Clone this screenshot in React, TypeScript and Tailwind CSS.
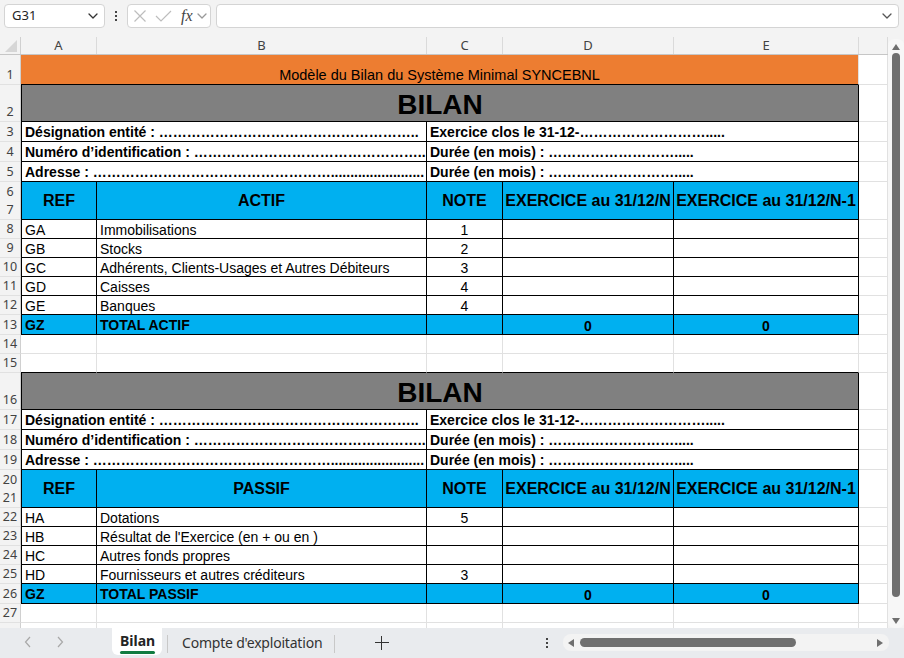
import React from 'react';

type Line = { ref: string; label: string; note?: string };

const actif: Line[] = [
  { ref: 'GA', label: 'Immobilisations', note: '1' },
  { ref: 'GB', label: 'Stocks', note: '2' },
  { ref: 'GC', label: 'Adhérents, Clients-Usages et Autres Débiteurs', note: '3' },
  { ref: 'GD', label: 'Caisses', note: '4' },
  { ref: 'GE', label: 'Banques', note: '4' },
];

const passif: Line[] = [
  { ref: 'HA', label: 'Dotations', note: '5' },
  { ref: 'HB', label: "Résultat de l'Exercice (en + ou en )" },
  { ref: 'HC', label: 'Autres fonds propres' },
  { ref: 'HD', label: 'Fournisseurs et autres créditeurs', note: '3' },
];

const ell = (n: number) => '…'.repeat(n);

// cell border presets
const tb = 'border-r border-b border-black';
const grid = 'border-r border-b border-[#e1e1e1]';
const cellText = 'shrink-0 flex items-end overflow-hidden whitespace-nowrap px-[3px] text-[14px] leading-[16px] text-black';

function RowNum({ n }: { n?: React.ReactNode }) {
  return (
    <div className="w-[21px] shrink-0 flex items-end justify-center pb-[1px] bg-[#f3f3f3] border-r border-b border-r-[#d0d0d0] border-b-[#e1e1e1] text-[12.5px] leading-[16px] text-[#424242] font-['Noto_Sans',sans-serif]">
      {n}
    </div>
  );
}

function RowNum2({ a, b }: { a: number; b: number }) {
  return (
    <div className="w-[21px] shrink-0 flex flex-col bg-[#f3f3f3] border-r border-b border-r-[#d0d0d0] border-b-[#e1e1e1] text-[12.5px] leading-[16px] text-[#424242] font-['Noto_Sans',sans-serif]">
      <div className="h-[19px] flex items-end justify-center pb-[1px]">{a}</div>
      <div className="flex-1 flex items-end justify-center pb-[1px]">{b}</div>
    </div>
  );
}

function Filler() {
  return <div className={`w-[29px] shrink-0 ${grid}`} />;
}

function EmptyRow({ n, bottomBlack }: { n?: number; bottomBlack?: boolean }) {
  const b = bottomBlack ? 'border-r border-b border-r-[#e1e1e1] border-b-black' : grid;
  return (
    <div className="flex h-[19px] shrink-0">
      <RowNum n={n} />
      <div className={`w-[76px] shrink-0 ${b}`} />
      <div className={`w-[330px] shrink-0 ${b}`} />
      <div className={`w-[76px] shrink-0 ${b}`} />
      <div className={`w-[171px] shrink-0 ${b}`} />
      <div className={`w-[185px] shrink-0 ${b}`} />
      <Filler />
    </div>
  );
}

function Section({ start, title, lines, total }: { start: number; title: string; lines: Line[]; total: string }) {
  const info: [string, string][] = [
    ['Désignation entité : ' + ell(18) + '..', 'Exercice clos le 31-12-' + ell(9) + '.....'],
    ['Numéro d’identification : ' + ell(16) + '..', 'Durée (en mois) : ' + ell(9) + '.....'],
    ['Adresse : ' + ell(17) + '.'.repeat(24), 'Durée (en mois) : ' + ell(9) + '.....'],
  ];
  const totalRow = start + 6 + lines.length;
  return (
    <>
      <div className="flex h-[37px] shrink-0">
        <RowNum n={start} />
        <div className={`w-[838px] shrink-0 flex items-end justify-center bg-[#808080] border-l ${tb} text-[28px] leading-[32px] font-bold text-black`}>
          BILAN
        </div>
        <Filler />
      </div>
      {info.map(([l, r], i) => (
        <div key={i} className="flex h-[20px] shrink-0">
          <RowNum n={start + 1 + i} />
          <div className={`w-[406px] border-l ${tb} ${cellText} text-[14.7px] leading-[17px] font-bold`}>{l}</div>
          <div className={`w-[432px] ${tb} ${cellText} text-[14.7px] leading-[17px] font-bold`}>{r}</div>
          <Filler />
        </div>
      ))}
      <div className="flex h-[38px] shrink-0">
        <RowNum2 a={start + 4} b={start + 5} />
        <div className={`w-[76px] shrink-0 flex items-center justify-center bg-[#00b0f0] border-l ${tb} text-[16px] font-bold`}>REF</div>
        <div className={`w-[330px] shrink-0 flex items-center justify-center bg-[#00b0f0] ${tb} text-[16px] font-bold`}>{title}</div>
        <div className={`w-[76px] shrink-0 flex items-center justify-center bg-[#00b0f0] ${tb} text-[16px] font-bold`}>NOTE</div>
        <div className={`w-[171px] shrink-0 flex items-center justify-center overflow-hidden whitespace-nowrap bg-[#00b0f0] ${tb} text-[16px] font-bold`}>EXERCICE au 31/12/N</div>
        <div className={`w-[185px] shrink-0 flex items-center justify-center overflow-hidden whitespace-nowrap bg-[#00b0f0] ${tb} text-[16px] font-bold`}>EXERCICE au 31/12/N-1</div>
        <Filler />
      </div>
      {lines.map((ln, i) => (
        <div key={ln.ref} className="flex h-[19px] shrink-0">
          <RowNum n={start + 6 + i} />
          <div className={`w-[76px] border-l ${tb} ${cellText}`}>{ln.ref}</div>
          <div className={`w-[330px] ${tb} ${cellText}`}>{ln.label}</div>
          <div className={`w-[76px] ${tb} ${cellText} justify-center`}>{ln.note}</div>
          <div className={`w-[171px] ${tb} ${cellText}`} />
          <div className={`w-[185px] ${tb} ${cellText}`} />
          <Filler />
        </div>
      ))}
      <div className="flex h-[20px] shrink-0">
        <RowNum n={totalRow} />
        <div className={`w-[76px] bg-[#00b0f0] border-l ${tb} ${cellText} text-[14.7px] leading-[17px] font-bold`}>GZ</div>
        <div className={`w-[330px] bg-[#00b0f0] ${tb} ${cellText} text-[14.7px] leading-[17px] font-bold`}>{total}</div>
        <div className={`w-[76px] bg-[#00b0f0] ${tb} ${cellText}`} />
        <div className={`w-[171px] bg-[#00b0f0] ${tb} ${cellText} font-bold justify-center`}>0</div>
        <div className={`w-[185px] bg-[#00b0f0] ${tb} ${cellText} font-bold justify-center`}>0</div>
        <Filler />
      </div>
    </>
  );
}

function Chevron({ className = '' }: { className?: string }) {
  return (
    <svg width="10" height="6" viewBox="0 0 10 6" className={className}>
      <path d="M1 1l4 4 4-4" fill="none" stroke="currentColor" strokeWidth="1.3" strokeLinecap="round" strokeLinejoin="round" />
    </svg>
  );
}

export default function App() {
  return (
    <div className="w-[904px] h-[658px] flex flex-col overflow-hidden bg-[#f3f3f3] font-['Liberation_Sans',Arial,sans-serif]">
      {/* formula bar */}
      <div className="h-[37px] shrink-0 flex items-start pt-[4px] pl-[4px] font-['Noto_Sans',sans-serif]">
        <div className="w-[101px] h-[24px] flex items-center justify-between pl-[7px] pr-[6px] bg-white border border-[#d4d4d4] rounded-[4px] text-[13px] text-[#242424]">
          <span>G31</span>
          <Chevron className="text-[#333]" />
        </div>
        <div className="w-[22px] h-[24px] flex flex-col items-center justify-center gap-[2px]">
          <span className="w-[2px] h-[2px] bg-[#444]" />
          <span className="w-[2px] h-[2px] bg-[#444]" />
          <span className="w-[2px] h-[2px] bg-[#444]" />
        </div>
        <div className="w-[84px] h-[24px] flex items-center bg-white border border-[#d4d4d4] rounded-[4px]">
          <svg width="14" height="14" viewBox="0 0 14 14" className="ml-[5px] text-[#bdbdbd]">
            <path d="M1.5 1.5l11 11M12.5 1.5l-11 11" stroke="currentColor" strokeWidth="1.2" />
          </svg>
          <svg width="17" height="12" viewBox="0 0 17 12" className="ml-[8px] text-[#bdbdbd]">
            <path d="M1 6l5 5L16 1" fill="none" stroke="currentColor" strokeWidth="1.2" />
          </svg>
          <span className="ml-[9px] text-[16px] leading-[16px] italic text-[#444] font-['Liberation_Serif',serif]">fx</span>
          <Chevron className="ml-[4px] text-[#999]" />
        </div>
        <div className="ml-[5px] w-[683px] h-[24px] flex items-center justify-end pr-[6px] bg-white border border-[#d4d4d4] rounded-[4px]">
          <Chevron className="text-[#555]" />
        </div>
      </div>

      {/* sheet */}
      <div className="flex-1 flex min-h-0">
        <div className="w-[888px] shrink-0 flex flex-col overflow-hidden bg-white">
          {/* column headers */}
          <div className="h-[18px] shrink-0 flex bg-[#f3f3f3] border-b border-[#c6c6c6] text-[13px] text-[#424242] font-['Noto_Sans',sans-serif]">
            <div className="w-[21px] shrink-0 flex items-end justify-end border-r border-[#d0d0d0]">
              <svg width="12" height="12" viewBox="0 0 12 12" className="mr-[3px] mb-[2px]">
                <polygon points="12,0 12,12 0,12" fill="#d6d6d6" />
              </svg>
            </div>
            <div className="w-[76px] shrink-0 flex items-center justify-center border-r border-[#dadada]">A</div>
            <div className="w-[330px] shrink-0 flex items-center justify-center border-r border-[#dadada]">B</div>
            <div className="w-[76px] shrink-0 flex items-center justify-center border-r border-[#dadada]">C</div>
            <div className="w-[171px] shrink-0 flex items-center justify-center border-r border-[#dadada]">D</div>
            <div className="w-[185px] shrink-0 flex items-center justify-center border-r border-[#dadada]">E</div>
            <div className="w-[29px] shrink-0 border-r border-[#dadada]" />
          </div>

          <div className="flex h-[30px] shrink-0">
            <RowNum n={1} />
            <div className="w-[838px] shrink-0 flex items-end justify-center bg-[#ed7d31] border-b border-r border-b-black border-r-[#e1e1e1] text-[14.5px] leading-[17px] text-black">
              Modèle du Bilan du Système Minimal SYNCEBNL
            </div>
            <Filler />
          </div>
          <Section start={2} title="ACTIF" lines={actif} total="TOTAL ACTIF" />
          <EmptyRow n={14} />
          <EmptyRow n={15} bottomBlack />
          <Section start={16} title="PASSIF" lines={passif} total="TOTAL PASSIF" />
          <EmptyRow n={27} />
          <EmptyRow />
        </div>

        {/* vertical scrollbar */}
        <div className="w-[16px] shrink-0 flex flex-col items-center pt-[5px] pb-[4px] mt-[2px] bg-[#f7f7f7] rounded-[6px]">
          <svg width="8" height="6" viewBox="0 0 8 6"><polygon points="4,0 8,6 0,6" fill="#6f6f6f" /></svg>
          <div className="w-[8px] flex-1 mt-[3px] mb-[21px] rounded-full bg-[#6f6f6f]" />
          <svg width="8" height="6" viewBox="0 0 8 6"><polygon points="0,0 8,0 4,6" fill="#6f6f6f" /></svg>
        </div>
      </div>

      {/* sheet tabs */}
      <div className="h-[30px] shrink-0 flex items-start bg-[#e9ebee] font-['Noto_Sans',sans-serif]">
        <div className="w-[112px] h-[30px] shrink-0 flex items-center pb-[2px]">
          <svg width="8" height="12" viewBox="0 0 8 12" className="ml-[24px]">
            <path d="M6 1L1.5 6 6 11" fill="none" stroke="#a8a8a8" strokeWidth="1.2" />
          </svg>
          <svg width="8" height="12" viewBox="0 0 8 12" className="ml-[24px]">
            <path d="M2 1l4.5 5L2 11" fill="none" stroke="#a8a8a8" strokeWidth="1.2" />
          </svg>
        </div>
        <div className="w-[50px] h-[27px] shrink-0 flex flex-col items-start pl-[8px] pt-[4px] bg-white rounded-b-[6px]">
          <span className="text-[14px] leading-[17px] font-bold text-[#242424]">Bilan</span>
          <span className="w-[35px] h-[3px] mt-[2px] rounded-full bg-[#107c41]" />
        </div>
        <div className="w-[1px] h-[18px] mt-[7px] ml-[5px] bg-[#c8c8c8]" />
        <div className="ml-[14px] pt-[6px] text-[14px] leading-[17px] text-[#333] w-[152px] shrink-0 tracking-[-0.2px]">Compte d'exploitation</div>
        <div className="w-[1px] h-[18px] mt-[7px] bg-[#c8c8c8]" />
        <div className="ml-[40px] mt-[8px] w-[14px] h-[14px] relative">
          <span className="absolute left-[6px] top-0 w-[1.3px] h-[14px] bg-[#333]" />
          <span className="absolute top-[6px] left-0 h-[1.3px] w-[14px] bg-[#333]" />
        </div>
        <div className="ml-[157px] mt-[10px] flex flex-col gap-[2px]">
          <span className="w-[2px] h-[2px] bg-[#444]" />
          <span className="w-[2px] h-[2px] bg-[#444]" />
          <span className="w-[2px] h-[2px] bg-[#444]" />
        </div>
        <div className="ml-[15px] mt-[6px] w-[326px] h-[17px] flex items-center bg-[#f3f3f3] rounded-[8px] px-[5px]">
          <svg width="6" height="8" viewBox="0 0 6 8"><polygon points="6,0 6,8 0,4" fill="#6f6f6f" /></svg>
          <div className="ml-[6px] w-[216px] h-[9px] rounded-full bg-[#6f6f6f]" />
          <div className="flex-1" />
          <svg width="6" height="8" viewBox="0 0 6 8" className="mr-[1px]"><polygon points="0,0 6,4 0,8" fill="#6f6f6f" /></svg>
        </div>
      </div>
    </div>
  );
}
